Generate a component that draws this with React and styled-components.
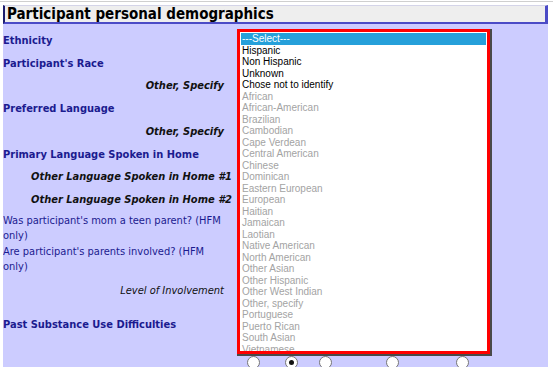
import React from "react";
import styled, { createGlobalStyle } from "styled-components";

const GlobalStyle = createGlobalStyle`
  html, body {
    margin: 0;
    padding: 0;
    background: #ffffff;
    overflow: hidden;
  }
`;

const rows = [
  { text: "Ethnicity", kind: "main", h: 22.5 },
  { text: "Participant's Race", kind: "main", h: 23 },
  { text: "Other, Specify", kind: "other", h: 22.5 },
  { text: "Preferred Language", kind: "main", h: 22.5 },
  { text: "Other, Specify", kind: "other", h: 23.5 },
  { text: "Primary Language Spoken in Home", kind: "main", h: 22.5 },
  { text: "Other Language Spoken in Home #1", kind: "sub", h: 21.5 },
  { text: "Other Language Spoken in Home #2", kind: "sub", h: 25 },
  { text: "Was participant's mom a teen parent? (HFM only)", kind: "plain", h: 31.5 },
  { text: "Are participant's parents involved? (HFM only)", kind: "plain", h: 31.5 },
  { text: "Level of Involvement", kind: "note", h: 31 },
  { text: "Past Substance Use Difficulties", kind: "main", h: 36.5 },
];

const options = [
  "Hispanic",
  "Non Hispanic",
  "Unknown",
  "Chose not to identify",
];

const disabledOptions = [
  "African",
  "African-American",
  "Brazilian",
  "Cambodian",
  "Cape Verdean",
  "Central American",
  "Chinese",
  "Dominican",
  "Eastern European",
  "European",
  "Haitian",
  "Jamaican",
  "Laotian",
  "Native American",
  "North American",
  "Other Asian",
  "Other Hispanic",
  "Other West Indian",
  "Other, specify",
  "Portuguese",
  "Puerto Rican",
  "South Asian",
  "Vietnamese",
];

const radios = [
  { gap: 12, checked: false },
  { gap: 25, checked: true },
  { gap: 21, checked: false },
  { gap: 54, checked: false },
  { gap: 57, checked: false },
];

export default function App() {
  return (
    <>
      <GlobalStyle />
      <Page>
        <Panel>
          <Header>Participant personal demographics</Header>
          <Body>
            <Form>
              {rows.map((row, i) => (
                <React.Fragment key={i}>
                  <Label kind={row.kind} style={{ height: row.h }}>
                    <span>{row.text}</span>
                  </Label>
                  <Field />
                </React.Fragment>
              ))}
              <Label kind="main" />
              <Field>
                <RadioRow>
                  {radios.map((r, i) => (
                    <Radio key={i} gap={r.gap} checked={r.checked} />
                  ))}
                </RadioRow>
              </Field>
            </Form>

            <ListBox>
              <Option selected>---Select---</Option>
              {options.map((o) => (
                <Option key={o}>{o}</Option>
              ))}
              {disabledOptions.map((o) => (
                <Option key={o} disabled>
                  {o}
                </Option>
              ))}
            </ListBox>
          </Body>
        </Panel>
      </Page>
    </>
  );
}

const Page = styled.div`
  margin-top: 1px;
  border-top: 1px solid #cfcfcf;
  height: 366px;
  padding-left: 3px;
  box-sizing: border-box;
`;

const Panel = styled.div`
  width: 545px;
  padding-top: 3px;
  display: flex;
  flex-direction: column;
  height: 100%;
  box-sizing: border-box;
`;

const Header = styled.div`
  height: 16px;
  line-height: 16px;
  background: #eeeeee;
  border-top: 1px solid #d4d4e8;
  border-left: 2px solid #1c1c6e;
  border-right: 3px solid #4b4bc6;
  border-bottom: 2px solid #4b4bc6;
  padding-left: 2px;
  font-family: "DejaVu Sans Condensed", "DejaVu Sans", Verdana, sans-serif;
  font-weight: bold;
  font-size: 15px;
  color: #000000;
  white-space: nowrap;
`;

const Body = styled.div`
  position: relative;
  flex: 1;
  background: #ccccff;
  padding-top: 5px;
  overflow: hidden;
`;

const Form = styled.div`
  display: grid;
  grid-template-columns: 232px 1fr;
  font-family: "DejaVu Sans Condensed", "DejaVu Sans", Verdana, sans-serif;
  font-size: 11px;
`;

const Label = styled.div`
  display: flex;
  align-items: center;
  box-sizing: border-box;
  line-height: 15px;
  justify-content: ${(p) => (p.kind === "other" || p.kind === "note" ? "flex-end" : "flex-start")};
  padding-right: ${(p) => (p.kind === "other" || p.kind === "note" ? "11px" : "4px")};
  padding-left: ${(p) => (p.kind === "sub" ? "28px" : "0")};
  color: ${(p) => (p.kind === "main" || p.kind === "plain" ? "#1b1b8f" : "#111111")};
  font-weight: ${(p) => (p.kind === "plain" || p.kind === "note" ? "normal" : "bold")};
  font-style: ${(p) => (p.kind === "other" || p.kind === "sub" || p.kind === "note" ? "italic" : "normal")};
  white-space: ${(p) => (p.kind === "sub" ? "nowrap" : "normal")};
`;

const Field = styled.div``;

const RadioRow = styled.div`
  display: flex;
  align-items: center;
  height: 39px;
`;

const Radio = styled.span`
  width: 11px;
  height: 11px;
  border-radius: 50%;
  border: 1px solid #767676;
  background: #ffffff;
  margin-left: ${(p) => p.gap}px;
  position: relative;
  flex-shrink: 0;

  &::after {
    content: "";
    display: ${(p) => (p.checked ? "block" : "none")};
    position: absolute;
    left: 3px;
    top: 3px;
    width: 5px;
    height: 5px;
    border-radius: 50%;
    background: #111111;
  }
`;

const ListBox = styled.div`
  position: absolute;
  left: 234px;
  top: 5px;
  width: 253px;
  height: 325px;
  box-sizing: border-box;
  border: 3px solid #ff0000;
  background: #ffffff;
  padding: 1px;
  overflow: hidden;
  box-shadow: 1px 1px 0 1px #4a4a4a;
  font-family: "Liberation Sans", Arial, sans-serif;
  font-size: 10px;
`;

const Option = styled.div`
  height: 11.5px;
  line-height: 11.5px;
  padding-left: 1px;
  white-space: nowrap;
  background: ${(p) => (p.selected ? "#26a0da" : "transparent")};
  color: ${(p) => (p.selected ? "#ffffff" : p.disabled ? "#a3a3a3" : "#000000")};
`;
